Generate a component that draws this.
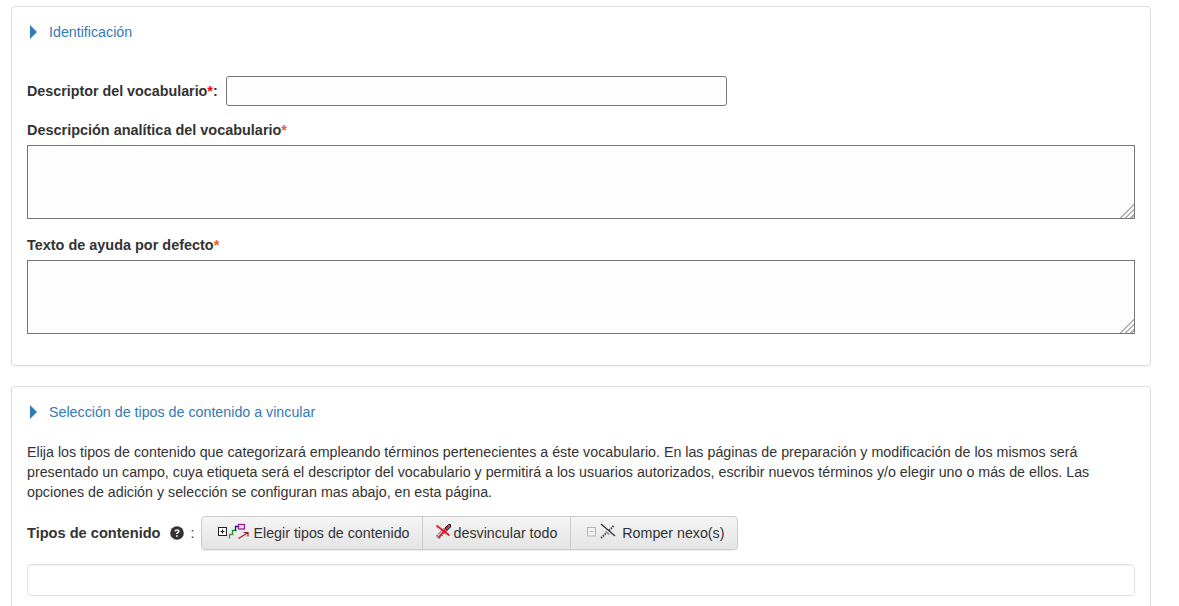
<div class="page">
  <section class="panel first">
    <h4 class="head"><span class="tri"></span><a href="#a">Identificación</a></h4>
    <div class="inline-row">
      <label for="d">Descriptor del vocabulario<span class="req">*</span>:</label>
      <input id="d" type="text" />
    </div>
    <div class="field">
      <label for="a">Descripción analítica del vocabulario<span class="req2">*</span></label>
      <div class="area"><textarea id="a"></textarea></div>
    </div>
    <div class="field">
      <label for="t">Texto de ayuda por defecto<span class="req2">*</span></label>
      <div class="area"><textarea id="t"></textarea></div>
    </div>
  </section>

  <section class="panel second">
    <h4 class="head"><span class="tri"></span><a href="#b">Selección de tipos de contenido a vincular</a></h4>
    <p>Elija los tipos de contenido que categorizará empleando términos pertenecientes a éste vocabulario. En las páginas de preparación y modificación de los mismos será presentado un campo, cuya etiqueta será el descriptor del vocabulario y permitirá a los usuarios autorizados, escribir nuevos términos y/o elegir uno o más de ellos. Las opciones de adición y selección se configuran mas abajo, en esta página.</p>
    <div class="tools">
      <strong>Tipos de contenido</strong>
      <svg class="help" viewBox="0 0 14 14" width="14" height="14" aria-hidden="true">
        <circle cx="7" cy="7" r="6.8" fill="#333" />
        <path d="M4.500 5.500C4.600 4 5.700 3.200 7.100 3.200c1.400 0 2.500.8 2.500 2 0 1-.6 1.400-1.200 1.800-.5.3-.7.5-.7 1.100H6.100c0-1 .3-1.500 1-1.900.5-.3.8-.5.8-1 0-.4-.4-.7-.9-.7-.6 0-.9.3-1 .8z" fill="#fff" />
        <rect x="6.100" y="9.200" width="1.600" height="1.600" fill="#fff" />
      </svg>
      <span class="colon">:</span>
      <div class="group">
        <button type="button" class="b1">
          <svg viewBox="0 0 34 20" width="34" height="20" aria-hidden="true">
            <rect x="1.500" y="4.500" width="8" height="8" fill="#fff" stroke="#222" />
            <path d="M3.500 8.500h4M5.500 6.500v4" stroke="#111" fill="none" />
            <path d="M12.500 15.500v-4h4" stroke="#777" stroke-width="1.300" fill="none" />
            <path d="M15.500 11.500v-4h4" stroke="#14a02c" stroke-width="1.300" fill="none" />
            <path d="M18.500 8v-4.500h4" stroke="#16169a" stroke-width="1.300" fill="none" />
            <rect x="21.500" y="1.500" width="6" height="4.500" fill="#f3dff3" stroke="#992299" stroke-width="1.300" />
            <path d="M21.500 15.500l9-5.500M26.500 9.500h4.500v4" stroke="#9a1f2a" stroke-width="1.200" fill="none" />
          </svg>
          <span>Elegir tipos de contenido</span>
        </button>
        <button type="button" class="b2">
          <svg viewBox="0 0 17 20" width="17" height="20" aria-hidden="true">
            <path d="M1.500 15l9-9 2.500 2.500-9 9z" fill="#cfe8fa" stroke="#112" stroke-dasharray="2 1" transform="translate(0 -2)" />
            <path d="M10 5l3.500-3.500h2v2.500l-3.500 3.500z" fill="#2f8fe0" stroke="#112" />
            <path d="M1.500 2.500l13 10M13.500 3L3.500 14.500" stroke="#ee101c" stroke-width="1.700" fill="none" />
          </svg>
          <span>desvincular todo</span>
        </button>
        <button type="button" class="b3">
          <svg viewBox="0 0 30 20" width="30" height="20" aria-hidden="true">
            <rect x="1.500" y="4.500" width="8" height="8.500" fill="#f2f2f2" stroke="#b5b5b5" />
            <path d="M3.500 8.500h4" stroke="#b5b5b5" />
            <path d="M15 1l14 12" stroke="#333" stroke-width="1.400" fill="none" />
            <path d="M15 15l6-5.500M23 7.500l5-5" stroke="#445" stroke-width="2" stroke-dasharray="1.500 1" fill="none" />
            <path d="M19.500 8.500l4 3" stroke="#888" stroke-width="1.500" fill="none" />
          </svg>
          <span>Romper nexo(s)</span>
        </button>
      </div>
    </div>
    <div class="well"></div>
  </section>
</div>

<style>
  :global(body) {
    margin: 0;
    background: #fff;
    overflow: hidden;
  }
  .page {
    height: 606px;
    overflow: hidden;
    box-sizing: border-box;
    padding: 6px 28px 0 11px;
    font-family: "Liberation Sans", Arial, sans-serif;
    font-size: 14.25px;
    line-height: 20px;
    color: #333;
  }
  .panel {
    box-sizing: border-box;
    background: #fff;
    border: 1px solid #ddd;
    border-radius: 4px;
    box-shadow: 0 1px 1px rgba(0, 0, 0, 0.05);
    padding: 15px;
    margin-bottom: 20px;
  }
  .first {
    height: 360px;
  }
  .head {
    margin: 0;
    display: flex;
    align-items: center;
    height: 20px;
    font-size: inherit;
    font-weight: 400;
  }
  .head a {
    color: #337ab7;
    text-decoration: none;
  }
  .tri {
    width: 0;
    height: 0;
    margin: -1px 12px 0 3px;
    border-style: solid;
    border-width: 7px 0 7px 7px;
    border-color: transparent transparent transparent #337ab7;
  }
  .inline-row {
    display: flex;
    align-items: center;
    gap: 8px;
    margin-top: 34px;
    height: 30px;
  }
  label {
    display: block;
    font-weight: 700;
    font-size: 14.3px;
  }
  .field label {
    font-size: 14.45px;
  }
  strong {
    font-size: 14.6px;
  }
  .req {
    color: #f00;
  }
  .req2 {
    color: #e8622a;
  }
  input {
    box-sizing: border-box;
    width: 501px;
    height: 30px;
    border: 1px solid #767676;
    border-radius: 3px;
    background: #fdfdfd;
    padding: 0 6px;
  }
  .field {
    margin-top: 14px;
  }
  .field + .field {
    margin-top: 16px;
  }
  .area {
    position: relative;
    width: 1108px;
    height: 74px;
    margin-top: 5px;
  }
  .area::after {
    content: "";
    position: absolute;
    right: 1px;
    bottom: 1px;
    width: 15px;
    height: 15px;
    background: repeating-linear-gradient(135deg, #b0b0b0 0 1.800px, #fff 1.800px 3.600px);
    clip-path: polygon(100% 0, 100% 100%, 0 100%);
  }
  textarea {
    display: block;
    box-sizing: border-box;
    width: 100%;
    height: 100%;
    margin: 0;
    border: 1px solid #767676;
    border-radius: 0;
    background: #fdfdfd;
    padding: 2px;
    resize: none;
  }
  p {
    margin: 20px 0 0;
    color: #333;
  }
  .tools {
    display: flex;
    align-items: center;
    margin-top: 14px;
    height: 34px;
  }
  .help {
    margin-left: 9px;
  }
  .colon {
    margin: 0 7px;
  }
  .group {
    display: flex;
    box-shadow: 0 1px 1px rgba(0, 0, 0, 0.08);
    border-radius: 4px;
  }
  button {
    box-sizing: border-box;
    display: flex;
    align-items: center;
    height: 34px;
    margin: 0 0 0 -1px;
    border: 1px solid #ccc;
    background: linear-gradient(#f5f5f5, #e4e4e4);
    font: inherit;
    color: #333;
    padding: 0 12px;
  }
  .b1 {
    margin-left: 0;
    border-radius: 4px 0 0 4px;
    padding-left: 15px;
  }
  .b1 span {
    margin-left: 2px;
  }
  .b2 {
    padding-right: 13px;
  }
  .b2 span {
    margin-left: 2px;
  }
  .b3 {
    border-radius: 0 4px 4px 0;
    padding-left: 15px;
  }
  .b3 span {
    margin-left: 6px;
  }
  .well {
    box-sizing: border-box;
    height: 32px;
    margin-top: 14px;
    background: #fff;
    border: 1px solid #e3e3e3;
    border-radius: 4px;
    box-shadow: inset 0 1px 1px rgba(0, 0, 0, 0.05);
  }
</style>
